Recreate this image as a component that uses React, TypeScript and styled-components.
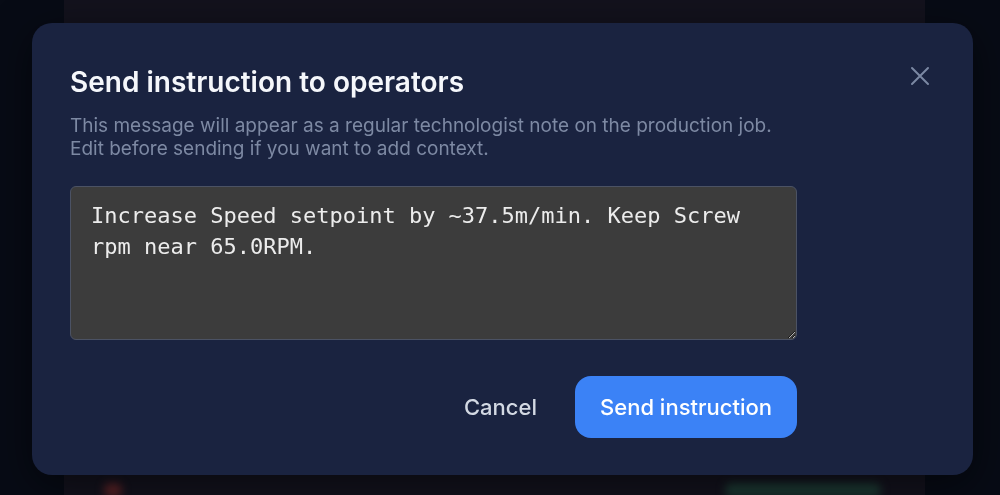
import styled, { createGlobalStyle } from 'styled-components';

const GlobalStyle = createGlobalStyle`
  html, body {
    margin: 0;
    padding: 0;
    background: #070b15;
    font-family: Inter, "Noto Sans", sans-serif;
    overflow: hidden;
  }
`;

const Screen = styled.div`
  height: 495px;
  padding: 0 75px 0 64px;
  display: flex;
`;

const PagePanel = styled.div`
  flex: 1;
  background: #13121d;
  display: flex;
  align-items: flex-end;
  justify-content: space-between;
  padding: 0 44px 0 40px;
`;

const Blob = styled.div<{ $color: string; $w: number }>`
  width: ${(p) => p.$w}px;
  height: 14px;
  border-radius: 6px;
  background: ${(p) => p.$color};
  filter: blur(4px);
  margin-bottom: -2px;
`;

const Overlay = styled.div`
  position: fixed;
  inset: 0;
  display: flex;
  align-items: flex-start;
  padding: 23px 0 0 32px;
`;

const Dialog = styled.div`
  width: 941px;
  height: 452px;
  box-sizing: border-box;
  background: #1a2340;
  border-radius: 20px;
  padding: 42px 41px 0 38px;
  display: flex;
  justify-content: space-between;
  box-shadow: 0 10px 40px rgba(0, 0, 0, 0.5);
`;

const Content = styled.div`
  width: 727px;
  display: flex;
  flex-direction: column;
`;

const Title = styled.h2`
  margin: 0;
  font-size: 28px;
  line-height: 34px;
  font-weight: 600;
  color: #f5f7fb;
`;

const Subtitle = styled.p`
  margin: 15px 0 0;
  font-size: 19px;
  line-height: 23px;
  color: #7d89a3;
`;

const MessageBox = styled.textarea`
  margin-top: 26px;
  height: 154px;
  box-sizing: border-box;
  padding: 13px 20px;
  background: #3c3c3c;
  border: 1px solid #4b5264;
  border-radius: 6px;
  color: #ececec;
  font-family: "DejaVu Sans Mono", monospace;
  font-size: 22px;
  line-height: 31px;
  resize: vertical;
  outline: none;
`;

const Actions = styled.div`
  margin-top: 36px;
  display: flex;
  justify-content: flex-end;
  align-items: center;
  gap: 38px;
`;

const TextButton = styled.button`
  background: none;
  border: none;
  padding: 0;
  font-family: inherit;
  font-size: 22px;
  font-weight: 500;
  color: #d3d9e3;
  cursor: pointer;
`;

const PrimaryButton = styled.button`
  height: 62px;
  width: 222px;
  border: none;
  border-radius: 16px;
  background: #3b82f6;
  color: #ffffff;
  font-family: inherit;
  font-size: 22px;
  font-weight: 500;
  cursor: pointer;
`;

const CloseButton = styled.button`
  margin-top: -1px;
  width: 24px;
  height: 24px;
  padding: 0;
  background: none;
  border: none;
  color: #7b88a3;
  display: flex;
  align-items: center;
  justify-content: center;
  cursor: pointer;
`;

const message =
  'Increase Speed setpoint by ~37.5m/min. Keep Screw rpm near 65.0RPM.';

function App() {
  return (
    <>
      <GlobalStyle />
      <Screen>
        <PagePanel>
          <Blob $color="#5a2226" $w={18} />
          <Blob $color="#1c3a33" $w={156} />
        </PagePanel>
      </Screen>
      <Overlay>
        <Dialog>
          <Content>
            <Title>Send instruction to operators</Title>
            <Subtitle>
              This message will appear as a regular technologist note on the production job.
              <br />
              Edit before sending if you want to add context.
            </Subtitle>
            <MessageBox defaultValue={message} spellCheck={false} />
            <Actions>
              <TextButton>Cancel</TextButton>
              <PrimaryButton>Send instruction</PrimaryButton>
            </Actions>
          </Content>
          <CloseButton aria-label="Close">
            <svg width="20" height="20" viewBox="0 0 20 20" fill="none">
              <path d="M2 2L18 18M18 2L2 18" stroke="currentColor" strokeWidth="2" strokeLinecap="round" />
            </svg>
          </CloseButton>
        </Dialog>
      </Overlay>
    </>
  );
}

export default App;
